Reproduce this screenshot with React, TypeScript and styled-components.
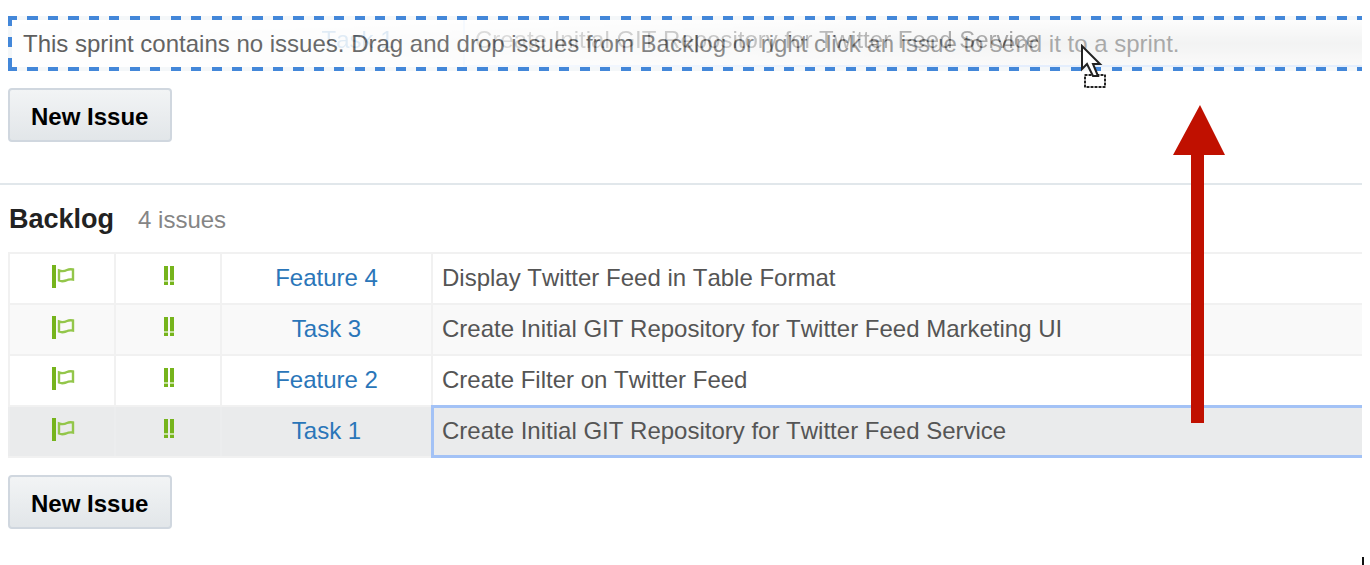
import React from 'react';
import styled, { createGlobalStyle } from 'styled-components';

const GlobalStyle = createGlobalStyle`
  * { box-sizing: border-box; }
  body {
    margin: 0;
    background: #ffffff;
    color: #555555;
    font-family: "Liberation Sans", Arial, sans-serif;
    font-size: 24px;
    line-height: 28px;
    font-kerning: none;
  }
`;

const Page = styled.main`
  position: relative;
  display: flex;
  flex-direction: column;
  min-height: 100vh;
  padding-right: 8px;
  overflow-x: clip;
`;

const SprintSection = styled.section`
  display: flex;
  flex-direction: column;
  align-items: flex-start;
  gap: 17px;
  padding: 16px 0 41px 8px;
  border-bottom: 2px solid #e1e7eb;
`;

const dash = (angle: string, count: number) =>
  `repeating-linear-gradient(${angle}, #4387d9 0 calc(100% / ${count * 2}), #f4f7f9 calc(100% / ${count * 2}) calc(100% / ${count}))`;

const DropZone = styled.div`
  position: relative;
  width: 100%;
  padding: 14px 0 13px 15px;
  background:
    linear-gradient(#4387d9, #4387d9) 0 0 / 8px 4px no-repeat,
    linear-gradient(#4387d9, #4387d9) 0 100% / 8px 4px no-repeat,
    ${dash('180deg', 11)} 0 0 / 4px 231px no-repeat,
    ${dash('90deg', 11)} -1px 0 / 225px 4px repeat-x,
    ${dash('90deg', 11)} -1px 100% / 225px 4px repeat-x;
`;

const Hint = styled.p`
  margin: 0;
  white-space: nowrap;
`;

const DragGhost = styled.div`
  position: absolute;
  inset: 4px 0 4px 4px;
  display: grid;
  grid-template-columns: 240px 211px 1fr;
  overflow: hidden;
  white-space: nowrap;
  background: linear-gradient(#fafafa, #e9eaea 50%, #f6f6f6);
  mask-image: linear-gradient(90deg, rgba(0, 0, 0, 0.06), rgba(0, 0, 0, 0.16) 28%, rgba(0, 0, 0, 0.32) 50%, rgba(0, 0, 0, 0.56) 78%);
  pointer-events: none;
`;

const GhostKey = styled.span`
  grid-column: 2;
  padding-top: 6px;
  color: #2a76bd;
  text-align: center;
`;

const GhostTitle = styled.span`
  padding: 6px 0 0 10px;
  border-left: 2px solid #cfe0fb;
  border-bottom: 2px solid #cfe0fb;
`;

const NewIssueButton = styled.button`
  height: 54px;
  padding: 3px 22px 0 21px;
  border: 2px solid #d0d7df;
  border-radius: 4px;
  background: linear-gradient(#f2f4f5, #e2e6e9);
  color: #000000;
  font: bold 24px/28px "Liberation Sans", Arial, sans-serif;
  cursor: pointer;
`;

const BacklogSection = styled.section`
  display: flex;
  flex-direction: column;
  align-items: flex-start;
  padding: 18px 0 0 8px;
`;

const Heading = styled.header`
  display: flex;
  align-items: baseline;
  gap: 24px;
  padding-left: 1px;
`;

const Title = styled.h2`
  margin: 0;
  color: #222222;
  font-size: 27px;
  line-height: 32px;
`;

const Count = styled.span`
  color: #858585;
`;

const TableFrame = styled.div`
  width: 100%;
  margin: 17px 0;
  overflow-x: clip;
`;

const IssueTable = styled.table`
  width: calc(100% + 8px);
  table-layout: fixed;
  border-collapse: collapse;
`;

const Column = styled.col<{ $width?: number }>`
  width: ${({ $width }) => ($width ? `${$width}px` : 'auto')};
`;

const Cell = styled.td<{ $left?: boolean; $focused?: boolean }>`
  padding: 0 9px 2px;
  border: 2px solid #f1f1f1;
  text-align: ${({ $left }) => ($left ? 'left' : 'center')};
  white-space: nowrap;
  outline: ${({ $focused }) => ($focused ? '3px solid #a3c2f6' : 'none')};
  outline-offset: -2px;
`;

const Row = styled.tr<{ $selected?: boolean }>`
  height: 51px;
  background: ${({ $selected }) => ($selected ? '#eaebec' : '#ffffff')};
  &:nth-child(2) { background: #f9f9f9; }
  &:last-child ${Cell} {
    border-left-color: #ecedee;
    border-right-color: #ecedee;
  }
`;

const IconCell = styled(Cell)`
  padding: 0 8px 6px 10px;
`;

const IssueLink = styled.a`
  color: #2a76b9;
  font-kerning: normal;
  text-decoration: none;
`;

const Icon = styled.svg`
  display: block;
  margin: 0 auto;
`;

const DragArrow = styled.svg`
  position: absolute;
  top: 105px;
  right: 145px;
`;

const Pointer = styled.svg`
  position: absolute;
  top: 28px;
  left: 1071px;
`;

const Caret = styled.span`
  position: absolute;
  right: 6px;
  bottom: 0;
  width: 2px;
  height: 8px;
  background: #111111;
`;

const FlagIcon = () => (
  <Icon width="24" height="26" viewBox="0 0 24 26" role="img" aria-label="Open">
    <path d="M1 2h4v23H1z" fill="#76b41c" />
    <path d="M8 7.500c3 1 5 1 8-.5c2-1 4-1 6-.5v10c-3-.5-5 0-7 1c-3 1-5 1-7 0z" fill="none" stroke="#93c64a" strokeWidth="2.400" />
  </Icon>
);

const PriorityIcon = () => (
  <Icon width="12" height="22" viewBox="0 0 12 22" role="img" aria-label="Normal priority">
    <path d="M1 1h4v14H1zM7 1h4v14H7zM1 17h4v3H1zM7 17h4v3H7z" fill="#76b41c" />
    <path d="M1 15h4v2H1zM7 15h4v2H7z" fill="#c4e09b" />
  </Icon>
);

const issues = [
  { key: 'Feature 4', title: 'Display Twitter Feed in Table Format' },
  { key: 'Task 3', title: 'Create Initial GIT Repository for Twitter Feed Marketing UI' },
  { key: 'Feature 2', title: 'Create Filter on Twitter Feed' },
  { key: 'Task 1', title: 'Create Initial GIT Repository for Twitter Feed Service', selected: true },
];

export default function App() {
  return (
    <>
      <GlobalStyle />
      <Page>
        <SprintSection>
          <DropZone>
            <Hint>
              This sprint contains no issues. Drag and drop issues from Backlog or right click an issue to send it to a sprint.
            </Hint>
            <DragGhost aria-hidden="true">
              <GhostKey>Task 1</GhostKey>
              <GhostTitle>Create Initial GIT Repository for Twitter Feed Service</GhostTitle>
            </DragGhost>
            <Pointer width="28" height="46" viewBox="0 0 28 46" aria-hidden="true">
              <path d="M6 31h20v12H6z" fill="#fff" stroke="#999" strokeWidth="2" />
              <path d="M6 31h20v12H6z" fill="none" stroke="#222" strokeWidth="2" strokeDasharray="2 2" />
              <path d="M3 2v23l5-5 6 12h5l-5-12h7z" fill="#fff" stroke="#222" strokeWidth="2" />
            </Pointer>
          </DropZone>
          <NewIssueButton type="button">New Issue</NewIssueButton>
        </SprintSection>

        <BacklogSection>
          <Heading>
            <Title>Backlog</Title>
            <Count>4 issues</Count>
          </Heading>
          <TableFrame>
            <IssueTable>
              <colgroup>
                <Column $width={106} />
                <Column $width={106} />
                <Column $width={211} />
                <Column />
              </colgroup>
              <tbody>
                {issues.map(({ key, title, selected }) => (
                  <Row key={key} $selected={selected}>
                    <IconCell><FlagIcon /></IconCell>
                    <IconCell><PriorityIcon /></IconCell>
                    <Cell><IssueLink href="#">{key}</IssueLink></Cell>
                    <Cell $left $focused={selected}>{title}</Cell>
                  </Row>
                ))}
              </tbody>
            </IssueTable>
          </TableFrame>
          <NewIssueButton type="button">New Issue</NewIssueButton>
        </BacklogSection>

        <DragArrow width="52" height="318" viewBox="0 0 52 318" aria-hidden="true">
          <path d="M27 0l25 50H31v268H18V50H0z" fill="#c01000" />
        </DragArrow>
        <Caret aria-hidden="true" />
      </Page>
    </>
  );
}
